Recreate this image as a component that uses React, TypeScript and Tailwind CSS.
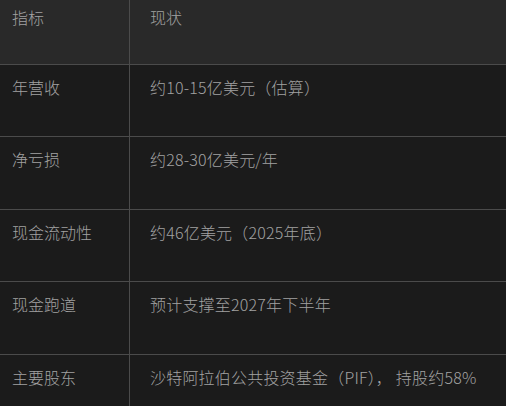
import React from "react";

const rows: [string, string, string][] = [
  ["年营收", "约10-15亿美元（估算）", "h-[72px]"],
  ["净亏损", "约28-30亿美元/年", "h-[73px]"],
  ["现金流动性", "约46亿美元（2025年底）", "h-[72px]"],
  ["现金跑道", "预计支撑至2027年下半年", "h-[73px]"],
  ["主要股东", "沙特阿拉伯公共投资基金（PIF）， 持股约58%", "h-[73px]"],
];

export default function App() {
  return (
    <div
      className="w-[506px] h-[406px] overflow-hidden bg-[#1b1b1b] text-[#a2a2a2] text-[16px] leading-[24px] font-light"
      style={{ fontFamily: '"Noto Sans CJK SC", "Noto Sans", sans-serif' }}
    >
      <div className="flex h-[65px] bg-[#292929] border-b border-[#4b4b4b]">
        <div className="w-[130px] shrink-0 border-r border-[#4b4b4b] pl-[12px] pt-[5px]">指标</div>
        <div className="flex-1 pl-[20px] pt-[5px]">现状</div>
      </div>
      {rows.map(([a, b, h], i) => (
        <div key={i} className={`flex ${h} border-b border-[#4b4b4b]`}>
          <div className="w-[130px] shrink-0 border-r border-[#4b4b4b] pl-[12px] pt-[10px]">{a}</div>
          <div className="flex-1 pl-[20px] pt-[10px] whitespace-nowrap tracking-[0.2px]">{b}</div>
        </div>
      ))}
    </div>
  );
}
